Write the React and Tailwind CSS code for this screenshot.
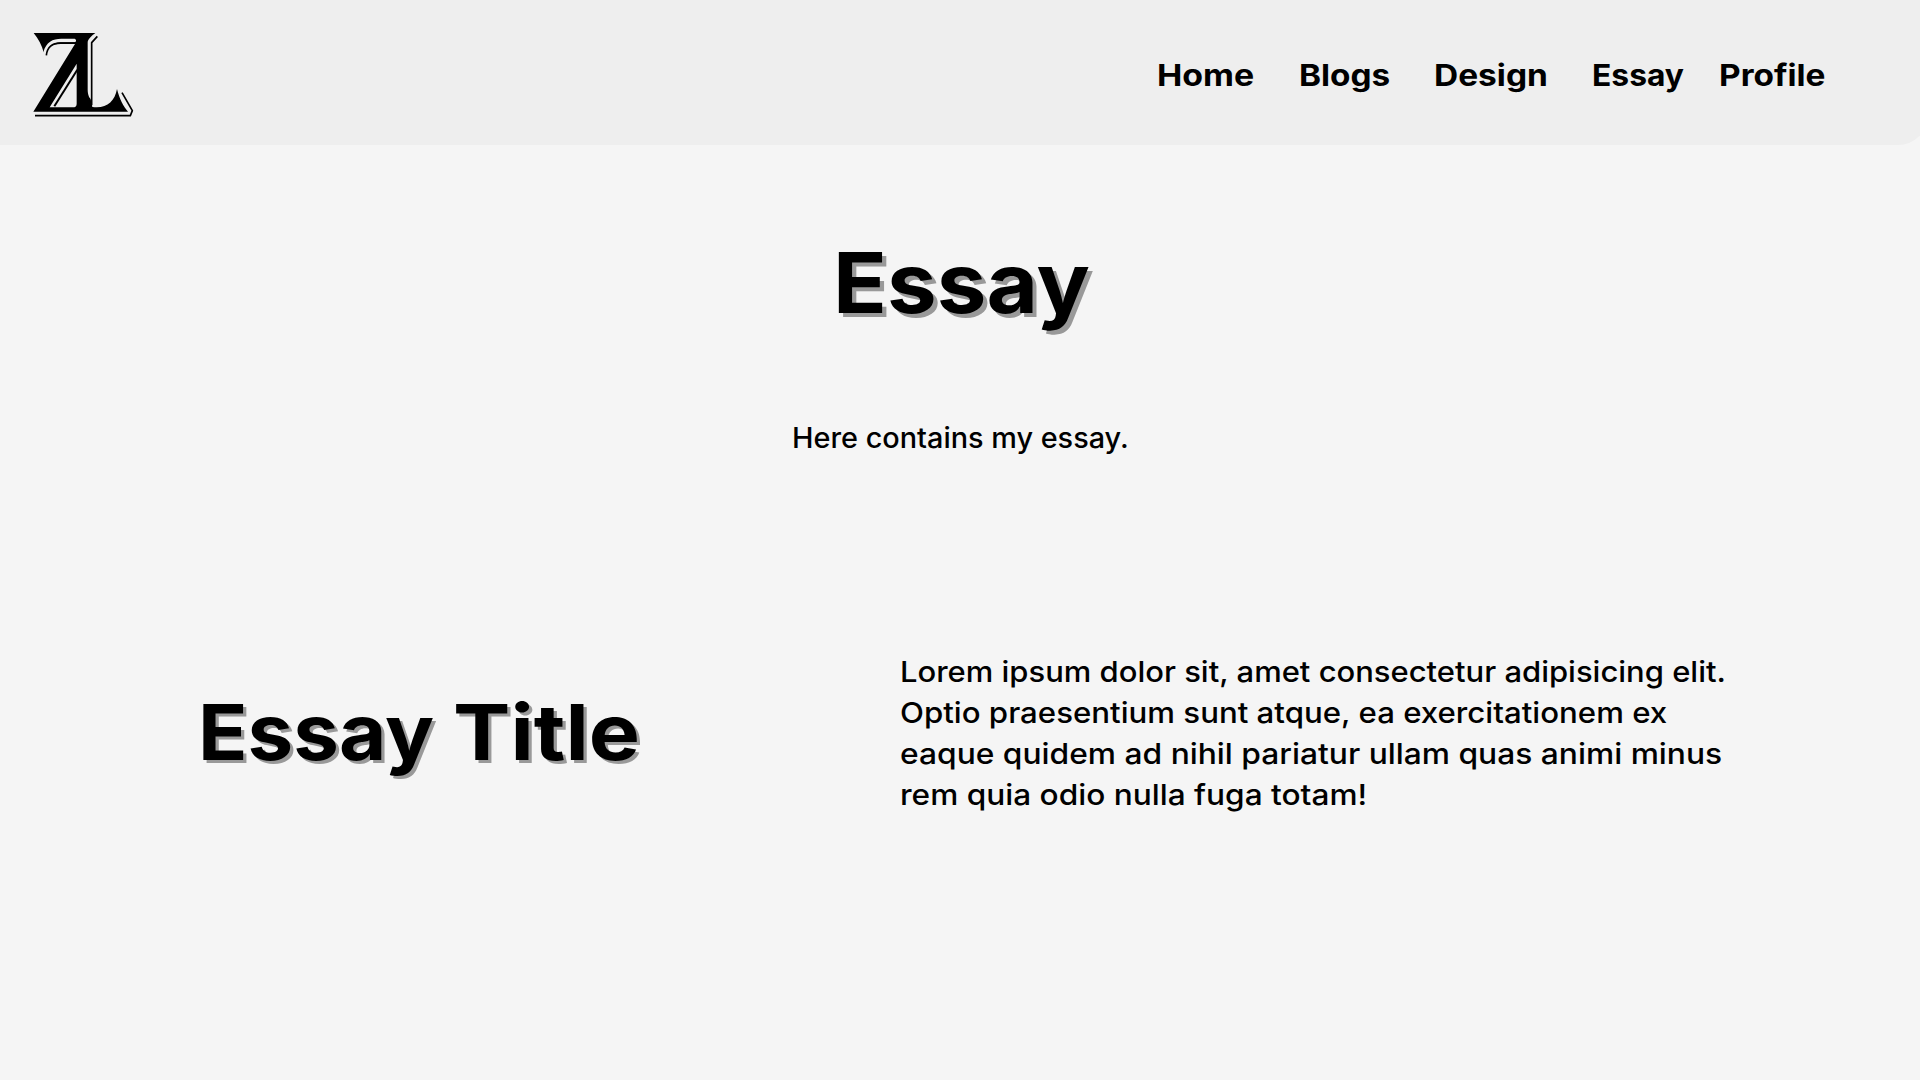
const NAV = [
  { label: 'Home', cls: 'w-[142px] scale-x-[1.13]' },
  { label: 'Blogs', cls: 'w-[135px] scale-x-[1.11]' },
  { label: 'Design', cls: 'w-[158px] scale-x-[1.115]' },
  { label: 'Essay', cls: 'w-[127px] scale-x-[1.06]' },
  { label: 'Profile', cls: 'w-[201px] scale-x-[1.113]' },
];

const LINES = [
  { text: 'Lorem ipsum dolor sit, amet consectetur adipisicing elit.', cls: 'scale-x-[1.068]' },
  { text: 'Optio praesentium sunt atque, ea exercitationem ex', cls: 'scale-x-[1.076]' },
  { text: 'eaque quidem ad nihil pariatur ullam quas animi minus', cls: 'scale-x-[1.095]' },
  { text: 'rem quia odio nulla fuga totam!', cls: 'scale-x-[1.09]' },
];

function Logo() {
  return (
    <svg className="block h-[110px] w-[130px]" viewBox="0 0 390 330" aria-label="ZL">
      <path d="M41 39H226C216 47 203 57 203 68V208C203 226 208 233 212 238L217 261C258 267 284 246 291 207C298 236 310 259 324 275H40L165 72H122C92 72 80 84 71 97C66 76 55 57 41 39ZM170 131 89 262H160C169 262 170 257 170 250Z" fill="#000" fillRule="evenodd" />
      <path d="M70 97C78 66 98 56 124 56H164Q172 61 165 67H122C96 68 82 82 79 104Z" fill="#eee" />
      <path d="M79 106C82 80 98 69 122 69H166" fill="none" stroke="#000" strokeWidth="5" />
      <path d="M103 259 172 149" fill="none" stroke="#000" strokeWidth="6" />
      <path d="M232 49 215 68V256M306 218 337 272 331 287H45" fill="none" stroke="#000" strokeWidth="5" strokeLinejoin="round" />
    </svg>
  );
}

export default function App() {
  return (
    <div className="h-[1080px] w-full overflow-hidden bg-[#f5f5f5] font-['Inter',sans-serif] text-black">
      <header className="flex h-[145px] w-[1928px] justify-between rounded-br-[30px] bg-[#eee]">
        <div className="pt-5 pl-5"><Logo /></div>
        <nav className="mr-[8px] flex items-center pt-[5px] text-[30px] font-bold leading-10">
          {NAV.map((n) => (
            <a key={n.label} className={`block origin-left ${n.cls}`}>{n.label}</a>
          ))}
        </nav>
      </header>
      <main>
        <h1 className="ml-[833px] mt-[88px] w-[260px] origin-left scale-x-[1.057] text-[84px] font-bold leading-[100px] [text-shadow:4px_4px_0_#999]">Essay</h1>
        <p className="ml-[792px] mt-[85px] w-[340px] origin-left scale-x-[1.03] text-[28px] font-medium leading-10">Here contains my essay.</p>
        <section className="mt-[193px] flex items-center">
          <h2 className="ml-[198px] flex w-[702px] pb-[3px] text-[77px] font-bold leading-[100px] [text-shadow:3px_3px_0_#999]">
            <span className="w-[255px] origin-left scale-x-[1.06]">Essay</span>{' '}
            <span className="origin-left scale-x-[1.117]">Title</span>
          </h2>
          <p className="text-[29px] font-medium leading-[41px]">
            {LINES.map((l) => (
              <span key={l.text} className={`block origin-left whitespace-nowrap ${l.cls}`}>{l.text}</span>
            ))}
          </p>
        </section>
      </main>
    </div>
  );
}
